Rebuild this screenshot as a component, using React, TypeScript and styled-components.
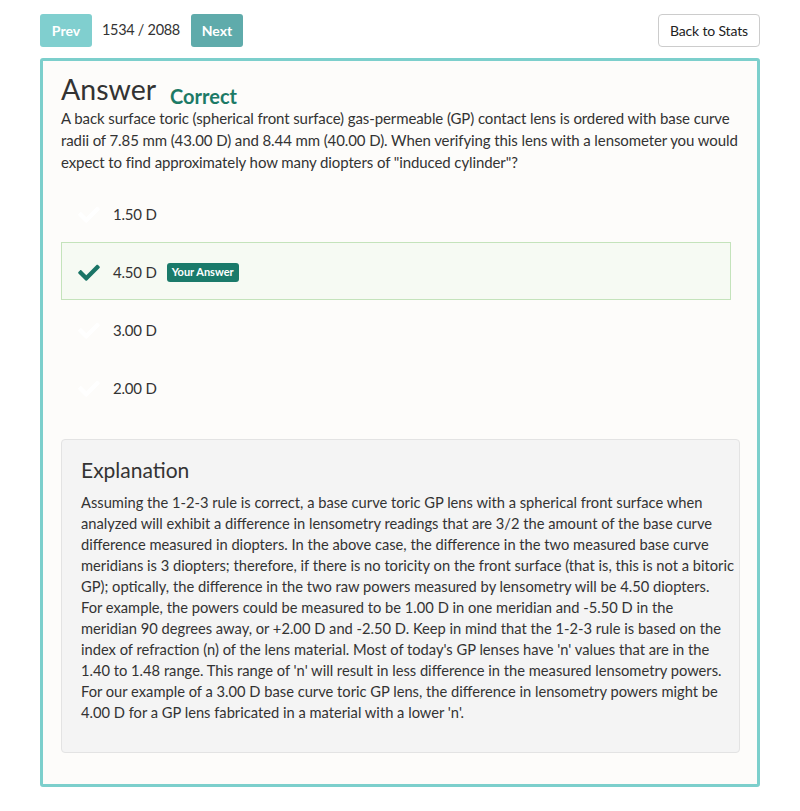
import React from "react";
import styled, { createGlobalStyle } from "styled-components";

const Global = createGlobalStyle`
  html, body { margin: 0; padding: 0; background: #ffffff; }
  body { font-family: Lato, "Open Sans", sans-serif; color: #333333; }
  * { box-sizing: border-box; }
`;

const Page = styled.div`
  padding: 14px 40px 24px 40px;
`;

const TopBar = styled.div`
  display: flex;
  align-items: center;
  justify-content: space-between;
  height: 33px;
`;

const NavGroup = styled.div`
  display: flex;
  align-items: center;
  gap: 10px;
`;

const NavButton = styled.button<{ $dark?: boolean }>`
  height: 33px;
  width: 52px;
  border: none;
  border-radius: 3px;
  background: ${(p) => (p.$dark ? "#5fabab" : "#80cfcf")};
  color: #ffffff;
  font-family: Lato, sans-serif;
  font-weight: 700;
  font-size: 14px;
  padding: 0;
`;

const Counter = styled.span`
  font-size: 14.5px;
  letter-spacing: -0.3px;
  color: #333;
  margin-right: 1px;
  position: relative;
  top: -1px;
`;

const StatsButton = styled.button`
  height: 33px;
  padding: 0 11px;
  background: #fff;
  border: 1px solid #cccccc;
  border-radius: 4px;
  font-family: Lato, sans-serif;
  font-size: 14px;
  letter-spacing: -0.15px;
  color: #222;
`;

const Card = styled.div`
  margin-top: 11px;
  border: 3px solid #7ccfcc;
  border-radius: 3px;
  background: #fdfcfa;
  padding: 10px 17px 31px 18px;
`;

const HeaderRow = styled.div`
  display: flex;
  align-items: baseline;
  gap: 14px;
`;

const Title = styled.h1`
  margin: 0;
  font-size: 28.5px;
  font-weight: 400;
  line-height: 36px;
  color: #333;
`;

const Status = styled.span`
  font-size: 20px;
  font-weight: 700;
  color: #1c7a66;
  position: relative;
  top: 4px;
`;

const Question = styled.p`
  margin: 0;
  font-size: 15px;
  letter-spacing: -0.1px;
  line-height: 22px;
  color: #333;
  white-space: nowrap;
`;

const Options = styled.div`
  margin: 11px 9px 23px 0;
  display: flex;
  flex-direction: column;
`;

const OptionRow = styled.div<{ $selected?: boolean }>`
  height: 58px;
  display: flex;
  align-items: center;
  padding-left: 16px;
  padding-top: 2px;
  border: 1px solid ${(p) => (p.$selected ? "#c4e3bb" : "transparent")};
  background: ${(p) => (p.$selected ? "#f6faf3" : "transparent")};
`;

const Check = styled.svg<{ $on?: boolean }>`
  width: 22px;
  height: 17px;
  margin-right: 13px;
  fill: ${(p) => (p.$on ? "#1a7466" : "#ffffff")};
  flex-shrink: 0;
`;

const OptionText = styled.span`
  font-size: 15px;
  letter-spacing: -0.2px;
  color: #333;
`;

const Badge = styled.span`
  margin-left: 10px;
  background: #1a7a6a;
  color: #fff;
  font-size: 11px;
  font-weight: 700;
  padding: 3px 5px 4px;
  border-radius: 3px;
  line-height: 12px;
`;

const ExplainBox = styled.div`
  background: #f4f4f4;
  border: 1px solid #e3e3e3;
  border-radius: 4px;
  padding: 17px 19px 29px 19px;
`;

const ExplainTitle = styled.h2`
  margin: 0 0 9px 0;
  font-size: 21px;
  font-weight: 400;
  line-height: 26px;
  color: #333;
`;

const ExplainText = styled.p`
  margin: 0;
  font-size: 14.7px;
  line-height: 21px;
  color: #333;
  white-space: nowrap;
`;

const CheckIcon = ({ on }: { on?: boolean }) => (
  <Check $on={on} viewBox="0 0 512 400">
    <path d="M173.9 389.4L7.5 223c-10-10-10-26.2 0-36.2l36.2-36.2c10-10 26.2-10 36.2 0L192 262.7 432.1 22.6c10-10 26.2-10 36.2 0l36.2 36.2c10 10 10 26.2 0 36.2L210.1 389.4c-10 10-26.2 10-36.2 0z" />
  </Check>
);

const options = [
  { label: "1.50 D" },
  { label: "4.50 D", selected: true },
  { label: "3.00 D" },
  { label: "2.00 D" },
];

const questionLines = [
  "A back surface toric (spherical front surface) gas-permeable (GP) contact lens is ordered with base curve",
  "radii of 7.85 mm (43.00 D) and 8.44 mm (40.00 D). When verifying this lens with a lensometer you would",
  'expect to find approximately how many diopters of "induced cylinder"?',
];

const explanationLines = [
  "Assuming the 1-2-3 rule is correct, a base curve toric GP lens with a spherical front surface when",
  "analyzed will exhibit a difference in lensometry readings that are 3/2 the amount of the base curve",
  "difference measured in diopters. In the above case, the difference in the two measured base curve",
  "meridians is 3 diopters; therefore, if there is no toricity on the front surface (that is, this is not a bitoric",
  "GP); optically, the difference in the two raw powers measured by lensometry will be 4.50 diopters.",
  "For example, the powers could be measured to be 1.00 D in one meridian and -5.50 D in the",
  "meridian 90 degrees away, or +2.00 D and -2.50 D. Keep in mind that the 1-2-3 rule is based on the",
  "index of refraction (n) of the lens material. Most of today's GP lenses have 'n' values that are in the",
  "1.40 to 1.48 range. This range of 'n' will result in less difference in the measured lensometry powers.",
  "For our example of a 3.00 D base curve toric GP lens, the difference in lensometry powers might be",
  "4.00 D for a GP lens fabricated in a material with a lower 'n'.",
];

const withBreaks = (lines: string[]) =>
  lines.map((l, i) => (
    <React.Fragment key={i}>
      {l}
      {i < lines.length - 1 && <br />}
    </React.Fragment>
  ));

export default function App() {
  return (
    <Page>
      <Global />
      <TopBar>
        <NavGroup>
          <NavButton>Prev</NavButton>
          <Counter>1534 / 2088</Counter>
          <NavButton $dark>Next</NavButton>
        </NavGroup>
        <StatsButton>Back to Stats</StatsButton>
      </TopBar>
      <Card>
        <HeaderRow>
          <Title>Answer</Title>
          <Status>Correct</Status>
        </HeaderRow>
        <Question>{withBreaks(questionLines)}</Question>
        <Options>
          {options.map((o) => (
            <OptionRow key={o.label} $selected={o.selected}>
              <CheckIcon on={o.selected} />
              <OptionText>{o.label}</OptionText>
              {o.selected && <Badge>Your Answer</Badge>}
            </OptionRow>
          ))}
        </Options>
        <ExplainBox>
          <ExplainTitle>Explanation</ExplainTitle>
          <ExplainText>{withBreaks(explanationLines)}</ExplainText>
        </ExplainBox>
      </Card>
    </Page>
  );
}
